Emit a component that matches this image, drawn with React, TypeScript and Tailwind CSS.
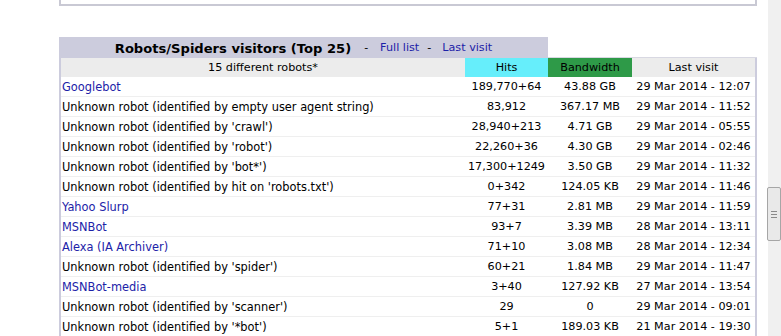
import React from "react";

type Row = { name: string; link?: boolean; hits: string; bw: string; last: string };

const rows: Row[] = [
  { name: "Googlebot", link: true, hits: "189,770+64", bw: "43.88 GB", last: "29 Mar 2014 - 12:07" },
  { name: "Unknown robot (identified by empty user agent string)", hits: "83,912", bw: "367.17 MB", last: "29 Mar 2014 - 11:52" },
  { name: "Unknown robot (identified by 'crawl')", hits: "28,940+213", bw: "4.71 GB", last: "29 Mar 2014 - 05:55" },
  { name: "Unknown robot (identified by 'robot')", hits: "22,260+36", bw: "4.30 GB", last: "29 Mar 2014 - 02:46" },
  { name: "Unknown robot (identified by 'bot*')", hits: "17,300+1249", bw: "3.50 GB", last: "29 Mar 2014 - 11:32" },
  { name: "Unknown robot (identified by hit on 'robots.txt')", hits: "0+342", bw: "124.05 KB", last: "29 Mar 2014 - 11:46" },
  { name: "Yahoo Slurp", link: true, hits: "77+31", bw: "2.81 MB", last: "29 Mar 2014 - 11:59" },
  { name: "MSNBot", link: true, hits: "93+7", bw: "3.39 MB", last: "28 Mar 2014 - 13:11" },
  { name: "Alexa (IA Archiver)", link: true, hits: "71+10", bw: "3.08 MB", last: "28 Mar 2014 - 12:34" },
  { name: "Unknown robot (identified by 'spider')", hits: "60+21", bw: "1.84 MB", last: "29 Mar 2014 - 11:47" },
  { name: "MSNBot-media", link: true, hits: "3+40", bw: "127.92 KB", last: "27 Mar 2014 - 13:54" },
  { name: "Unknown robot (identified by 'scanner')", hits: "29", bw: "0", last: "29 Mar 2014 - 09:01" },
  { name: "Unknown robot (identified by '*bot')", hits: "5+1", bw: "189.03 KB", last: "21 Mar 2014 - 19:30" },
];

export default function App() {
  return (
    <div
      className="flex w-[781px] h-[336px] overflow-hidden bg-white text-black text-[11.2px]"
      style={{ fontFamily: '"DejaVu Sans", Verdana, sans-serif' }}
    >
      <div className="w-[768px] shrink-0 pl-[59px] pr-[11px]">
        <div className="h-[6px] border-x-2 border-b-2 border-[#C9C9D4]" />
        <div className="mt-[31px]">
          <div className="flex h-[21px]">
            <div className="w-[489px] bg-[#CCCCDD] flex items-center justify-center whitespace-nowrap pt-[2px]">
              <span className="font-bold text-[13.1px]">Robots/Spiders visitors (Top 25)</span>
              <span className="ml-[13px] mr-[12px] text-[11px]">-</span>
              <span className="text-[#1C22A8]">Full list</span>
              <span className="ml-[8px] mr-[11px]">-</span>
              <span className="text-[#1C22A8]">Last visit</span>
            </div>
            <div className="flex-1 flex flex-col justify-end">
              <div className="h-[1px] bg-[#D8D8E2]" />
            </div>
          </div>
          <div className="border-x-2 border-[#CCCCDD]">
            <div className="grid grid-cols-[404px_83px_84px_123px] h-[19px] items-stretch">
              <div className="bg-[#ECECEC] flex items-center justify-center pt-[2px]">15 different robots*</div>
              <div className="bg-[#66EEFB] flex items-center justify-center pt-[2px]">Hits</div>
              <div className="bg-[#2E9A48] flex items-center justify-center pt-[2px]">Bandwidth</div>
              <div className="bg-[#ECECEC] flex items-center justify-center pt-[2px]">Last visit</div>
            </div>
            {rows.map((r, i) => (
              <div
                key={i}
                className="grid grid-cols-[404px_83px_84px_123px] h-[20px] items-center pt-[2px] border-b border-[#EFEFEF] whitespace-nowrap"
              >
                <div className={`pl-[1px] text-[11.4px] ${r.link ? "text-[#1C22A8]" : ""}`}>{r.name}</div>
                <div className="text-center">{r.hits}</div>
                <div className="text-center">{r.bw}</div>
                <div className="text-center">{r.last}</div>
              </div>
            ))}
          </div>
        </div>
      </div>
      <div className="w-[13px] shrink-0 bg-[#F0F0F0] flex flex-col">
        <div className="h-[187px] shrink-0" />
        <div className="h-[54px] w-[14px] -ml-[1px] rounded-[2px] border border-[#A6A6A6] bg-[#E9E9E9] flex flex-col items-center justify-center gap-[2px]">
          <div className="w-[6px] h-[1px] bg-[#8A8A8A]" />
          <div className="w-[6px] h-[1px] bg-[#8A8A8A]" />
          <div className="w-[6px] h-[1px] bg-[#8A8A8A]" />
        </div>
      </div>
    </div>
  );
}
